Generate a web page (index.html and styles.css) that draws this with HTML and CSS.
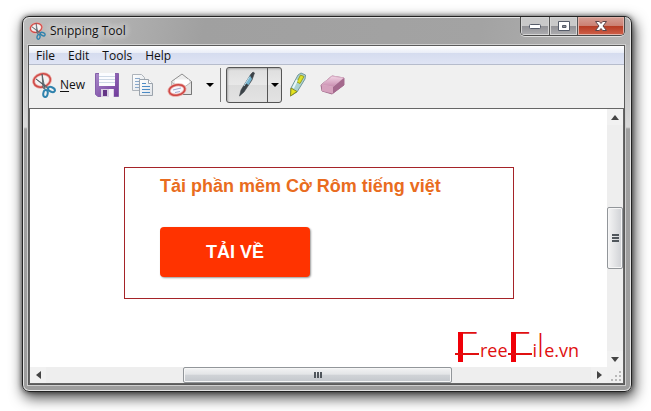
FILE: index.html
```html
<!DOCTYPE html>
<html lang="vi">
<head>
<meta charset="utf-8">
<meta name="viewport" content="width=device-width, initial-scale=1">
<title>Snipping Tool</title>
<link rel="stylesheet" href="styles.css">
</head>
<body>
<svg width="0" height="0" class="defs" aria-hidden="true">
  <defs>
    <linearGradient id="purple" x2="1" y2="1"><stop stop-color="#a98ac9"/><stop offset="1" stop-color="#70389b"/></linearGradient>
    <linearGradient id="paper" x2="1" y2="1"><stop stop-color="#fff"/><stop offset="1" stop-color="#dfe3e8"/></linearGradient>
    <linearGradient id="pink" x2="0" y2="1"><stop stop-color="#f2d5e5"/><stop offset="1" stop-color="#c88bae"/></linearGradient>
    <symbol id="scissors" viewBox="0 0 24 26">
      <ellipse cx="10" cy="8.500" rx="8.500" ry="6.500" transform="rotate(-15 10 8.500)" fill="#f4f2f2" stroke="#e9a49f" stroke-width="3"/>
      <ellipse cx="10" cy="8.500" rx="8.500" ry="6.500" transform="rotate(-15 10 8.500)" fill="none" stroke="#cf4a47" stroke-width="1.500"/>
      <path d="M4 7l13 9-1 1zM10 2l3 15-2-1z" fill="#8b949b" stroke="#4e5961" stroke-width=".8"/>
      <ellipse cx="19.500" cy="17.500" rx="3.600" ry="2.200" transform="rotate(25 19.500 17.500)" fill="none" stroke="#2f82ad" stroke-width="2"/>
      <ellipse cx="13.500" cy="21.500" rx="2.200" ry="3.500" transform="rotate(10 13.500 21.500)" fill="none" stroke="#2f82ad" stroke-width="2"/>
    </symbol>
  </defs>
</svg>
<main class="window">
  <header class="titlebar">
    <svg class="app-icon" aria-hidden="true"><use href="#scissors"/></svg>
    <h1 class="title">Snipping Tool</h1>
    <div class="controls">
      <button class="control" aria-label="Minimize"><svg width="14" height="8" viewBox="0 0 14 8"><rect x="1.500" y="2.500" width="11" height="4" rx="1" fill="#fff" stroke="#555b68"/></svg></button>
      <button class="control" aria-label="Maximize"><svg width="14" height="11" viewBox="0 0 14 11"><path d="M1.500.5h11v9h-11zM5.500 4.500v2h3.500v-2z" fill="#fff" fill-rule="evenodd" stroke="#555b68"/></svg></button>
      <button class="control close" aria-label="Close"><svg width="14" height="11" viewBox="0 0 14 11"><path d="M1.500.5h3.800L7 2.500 8.700.5h3.800L9 5l3.500 4.500H8.700L7 7.500l-1.700 2H1.500L5 5z" fill="#fff" stroke="#5d4448"/></svg></button>
    </div>
  </header>
  <div class="client">
    <nav class="menubar">
      <button class="menu">File</button>
      <button class="menu">Edit</button>
      <button class="menu">Tools</button>
      <button class="menu">Help</button>
    </nav>
    <div class="toolbar">
      <button class="tool new"><svg width="24" height="26" aria-hidden="true"><use href="#scissors"/></svg><span><u>N</u>ew</span></button>
      <button class="tool" aria-label="Save"><svg width="24" height="24" viewBox="0 0 24 24">
        <path d="M.5.5h23v23H3l-2.500-2z" fill="url(#purple)" stroke="#8560aa"/><path d="M4 0h16v13H4z" fill="#fbfcff"/><path d="M4 3.500h16M4 6.500h16M4 9.500h16" stroke="#cdd8e6"/><path d="M6 16h13v8H6z" fill="#d8cfe2"/><path d="M8 17h4v6H8z" fill="#643586"/><path d="M14 16h4v8h-4z" fill="#f4f0f8"/></svg></button>
      <button class="tool" aria-label="Copy"><svg width="22" height="24" viewBox="0 0 22 24">
        <path d="M.5 1.500h9l3 3v13H.5z" fill="url(#paper)" stroke="#aeb4bb"/><path d="M3 5.500h5M3 8.500h6M3 11.500h4M3 14.500h4" stroke="#8aa9cb"/>
        <path d="M7.500 6.500h9l4 4v12h-13z" fill="url(#paper)" stroke="#9ba3ac"/><path d="M16.500 6.500v4h4" fill="#fff" stroke="#9ba3ac"/><path d="M10 10.500h4M10 13.500h8M10 16.500h8M10 19.500h8" stroke="#4c8bc5"/></svg></button>
      <button class="tool" aria-label="Send snip"><svg width="26" height="24" viewBox="0 0 26 24">
        <path d="M4.500 8.500L15 1l9.500 7.500v13h-20z" fill="#eee" stroke="#8e8e8e"/><path d="M8 6.500h14v8H8z" fill="#fff"/><path d="M4.500 9l10 7 10-7v12.500h-20z" fill="#e4e4e4" stroke="#b8b8b8"/><path d="M24.500 8.500v13h-9" fill="none" stroke="#777"/>
        <ellipse cx="10" cy="17" rx="8" ry="5.200" transform="rotate(-12 10 17)" fill="#f7f7fc" stroke="#e9a49f" stroke-width="3"/><ellipse cx="10" cy="17" rx="8" ry="5.200" transform="rotate(-12 10 17)" fill="none" stroke="#ce4745" stroke-width="1.500"/><path d="M6 17l8-2M8 19.500l5-1" stroke="#a2a7cf"/></svg></button>
      <button class="tool arrow" aria-label="Send options"><svg width="8" height="4" viewBox="0 0 8 4"><path d="M0 0h8L4 4z"/></svg></button>
      <span class="divider"></span>
      <div class="split">
        <button class="tool pen" aria-label="Pen"><svg width="18" height="28" viewBox="0 0 18 28">
          <path d="M13 3l2-2 1.500 1L14 9 6 21l-4.500 4L3 19z" fill="#3b4247" stroke="#3b4247" stroke-width=".6"/><path d="M12 4.500L7.500 12l3 2 3.500-6z" fill="#74b3ce"/><path d="M11.500 6L6 15" stroke="#b7dcea"/></svg></button>
        <button class="tool pen-arrow" aria-label="Pen options"><svg width="8" height="4" viewBox="0 0 8 4"><path d="M0 0h8L4 4z"/></svg></button>
      </div>
      <button class="tool" aria-label="Highlighter"><svg width="18" height="26" viewBox="0 0 18 26">
        <path d="M9 3l3-2 4.500 2-.5 4L8 20l-6.500 4L2 16z" fill="#acd2d2" stroke="#71989b"/><path d="M11.500 3l3.500 1.500-4 7-3-1.500z" fill="#dce228" stroke="#9a9f24"/><path d="M8 8l-4 8" stroke="#e8f7f8" stroke-width="2"/><path d="M2 16l6 3.500-6.500 4.500z" fill="#e5e31f" stroke="#8b8d24"/></svg></button>
      <button class="tool" aria-label="Eraser"><svg width="26" height="22" viewBox="0 0 26 22">
        <path d="M1 11L12 2l12 2v7L12 20 2 17z" fill="#bd81a5" stroke="#a5708f"/><path d="M1.500 11L12 2l12 2-11 9z" fill="url(#pink)" stroke="#d8aec5"/><path d="M13 13l11-9v7l-11 8.500z" fill="#a4698d"/><path d="M2 11l11 2v6.500L2 17z" fill="#d6a2be"/></svg></button>
    </div>
    <div class="workspace">
      <section class="document">
        <article class="card">
          <h2 class="heading">Tải phần mềm Cờ Rôm tiếng việt</h2>
          <button class="download">TẢI VỀ</button>
        </article>
        <div class="brand"><span class="cap">F</span><span class="small">ree</span><span class="cap">F</span><span class="small">i<span class="tall">l</span>e.vn</span></div>
      </section>
      <div class="scroll vertical">
        <button class="step" aria-label="Scroll up"><svg width="8" height="5" viewBox="0 0 8 5"><path d="M0 5l4-5 4 5z"/></svg></button>
        <div class="track"><span class="thumb"><i></i><i></i><i></i></span></div>
        <button class="step" aria-label="Scroll down"><svg width="8" height="5" viewBox="0 0 8 5"><path d="M0 0h8L4 5z"/></svg></button>
      </div>
      <div class="scroll horizontal">
        <button class="step" aria-label="Scroll left"><svg width="5" height="8" viewBox="0 0 5 8"><path d="M5 0v8L0 4z"/></svg></button>
        <div class="track"><span class="thumb"><i></i><i></i><i></i></span></div>
        <button class="step" aria-label="Scroll right"><svg width="5" height="8" viewBox="0 0 5 8"><path d="M0 0v8l5-4z"/></svg></button>
      </div>
      <div class="grip"><svg width="10" height="10" viewBox="0 0 10 10"><path d="M8 0h2v2H8zM4 4h2v2H4zM8 4h2v2H8zM0 8h2v2H0zM4 8h2v2H4zM8 8h2v2H8z" fill="#b9b9b9"/></svg></div>
    </div>
  </div>
</main>
</body>
</html>
```
FILE: styles.css
```css
* { box-sizing: border-box; }

body {
  margin: 0;
  min-height: 100vh;
  padding: 16px 19px 19px 22px;
  display: flex;
  background: #fff;
  color: #111;
  font: 12px/18px "Open Sans", "Noto Sans", sans-serif;
}

.defs { position: absolute; }

button {
  margin: 0;
  padding: 0;
  border: 0;
  background: none;
  color: inherit;
  font: inherit;
}

svg { display: block; flex: none; }

.window {
  flex: 1;
  min-width: 0;
  display: flex;
  flex-direction: column;
  padding: 0 6px 6px 5px;
  border: 1px solid #222;
  border-radius: 7px;
  background:
    linear-gradient(100deg, #bdbdbd 0, #b5b5b5 70px, #a0a0a0 180px, #a3a3a3 75%, #b4b4b4 100%) 0 0 / 100% 28px no-repeat,
    linear-gradient(#b8b8b8 28px, #d8d8d8 110px, #a0a0a0 112px, #9d9d9d);
  box-shadow:
    inset 0 0 0 1px #e4e4e4,
    0 0 5px rgba(0, 0, 0, .6),
    2px 5px 14px 1px rgba(0, 0, 0, .7);
}

.titlebar { display: flex; height: 28px; }

.app-icon { width: 17px; height: 18px; margin: 5px 4px 0 1px; }

.title {
  flex: 1;
  margin: 5px 0 0;
  font-size: 12px;
  font-weight: 400;
  line-height: 18px;
  text-shadow: 0 0 6px #eee, 0 0 8px #eee;
}

.controls {
  display: flex;
  height: 19px;
  border: 1px solid #4a4a4a;
  border-top: 0;
  border-radius: 0 0 5px 5px;
  overflow: hidden;
  box-shadow: 0 1px 0 #ddd;
}

.control {
  width: 28px;
  display: grid;
  place-items: center;
  background: linear-gradient(#c9c9c9 50%, #919195 50%, #adadb0);
  box-shadow: inset 0 0 0 1px #d5d5d5;
}

.control + .control { border-left: 1px solid #555; }

.control.close {
  width: 47px;
  background: linear-gradient(#d6a096, #cb7f71 50%, #b53a22 50%, #d0614a);
  box-shadow: inset 0 0 0 1px #e2b3aa;
}

.client {
  flex: 1;
  display: flex;
  flex-direction: column;
  border: 1px solid #5a5a5a;
  box-shadow: 0 0 0 1px #cfcfcf;
  background: #f0f0f0;
}

.menubar {
  display: flex;
  gap: 13px;
  height: 19px;
  padding-left: 7px;
  border-bottom: 1px solid #b6bccc;
  background: linear-gradient(#fff, #e9edf7 7px, #d5dcef 7px, #dfe4f4);
}

.menu { height: 20px; line-height: 20px; }

.toolbar {
  display: flex;
  align-items: center;
  gap: 13px;
  height: 44px;
  padding: 0 3px 4px;
  border-bottom: 1px solid #666;
}

.tool { display: flex; align-items: center; justify-content: center; }

.new { gap: 4px; margin-right: -3px; }

.new u { text-underline-offset: 2px; }

.arrow { margin-right: -7px; }

.divider { width: 1px; height: 34px; margin-right: -8px; background: #777; }

.split {
  display: flex;
  height: 36px;
  margin-right: -6px;
  border: 1px solid #555;
  border-radius: 3px;
  background: linear-gradient(#dedede, #e8e8e8 50%, #dcdcdc 50%, #e3e3e3);
  box-shadow: inset 1px 1px 2px #aaa;
}

.pen { width: 40px; }

.pen-arrow { width: 14px; border-left: 1px solid #555; }

.workspace {
  flex: 1;
  display: grid;
  grid-template: 1fr 16px / 1fr 16px;
  border: 1px solid #666;
  border-width: 0 1px 1px;
}

.document {
  display: flex;
  flex-direction: column;
  justify-content: space-between;
  padding: 58px 28px 5px 94px;
  background: #fff;
}

.card {
  height: 132px;
  margin-right: 65px;
  padding: 7px 35px;
  border: 1px solid #a52328;
}

.heading {
  margin: 0 0 30px;
  color: #e96c20;
  font: bold 18px/22px "Liberation Sans", Arial, sans-serif;
  white-space: nowrap;
}

.download {
  width: 150px;
  height: 50px;
  border-radius: 4px;
  background: #f30;
  box-shadow: 1px 1px 2px rgba(0, 0, 0, .4);
  color: #fff;
  font: bold 18px/50px "Liberation Sans", Arial, sans-serif;
}

.brand {
  display: flex;
  align-self: flex-end;
  height: 30px;
  color: #e01010;
}

/* Art-deco capitals: a light letter with a heavy stem and a low crossbar. */
.cap {
  position: relative;
  width: 24px;
  height: 30px;
  font: 300 41px/28px Lato, sans-serif;
}

.cap::before {
  content: "";
  position: absolute;
  left: 3px;
  top: 0;
  width: 5px;
  height: 30px;
  background: #f00008;
}

.cap::after {
  content: "";
  position: absolute;
  left: 0;
  top: 4px;
  width: 24px;
  height: 17px;
  border-bottom: 2px solid #e01010;
  background: linear-gradient(90deg, transparent 8px, #fff 8px);
}

.small { padding-left: 1px; font: 18px/36px "Open Sans", sans-serif; }

.tall { font-size: 31px; line-height: 1px; font-weight: 300; }

.scroll { display: flex; background: #eee; }

.vertical { flex-direction: column; }

.step {
  display: grid;
  place-items: center;
  flex: 0 0 16px;
  background: #f1f1f1;
  color: #333;
}

.step svg { fill: #444; }

.track { flex: 1; display: grid; }

.vertical .track { grid-template-rows: 82fr 62fr 82fr; }

.horizontal .track { grid-template-columns: 137fr 269fr 139fr; }

.thumb {
  display: flex;
  align-items: center;
  justify-content: center;
  gap: 1px;
  border: 1px solid #92969a;
  border-radius: 2px;
  box-shadow: inset 0 0 0 1px #f6f6f6;
}

.vertical .thumb {
  grid-row: 2;
  flex-direction: column;
  background: linear-gradient(90deg, #f4f4f5, #e2e3e5 50%, #cfd1d5);
}

.horizontal .thumb {
  grid-column: 2;
  background: linear-gradient(#f2f3f4, #e3e5e7 45%, #d0d3d7 50%, #c3c7cc);
}

.thumb i { background: #50565c; }

.vertical i { width: 7px; height: 2px; }

.horizontal i { width: 2px; height: 6px; }

.grip {
  display: flex;
  align-items: flex-end;
  justify-content: flex-end;
  padding: 2px;
  background: #f0f0f0;
}
```
